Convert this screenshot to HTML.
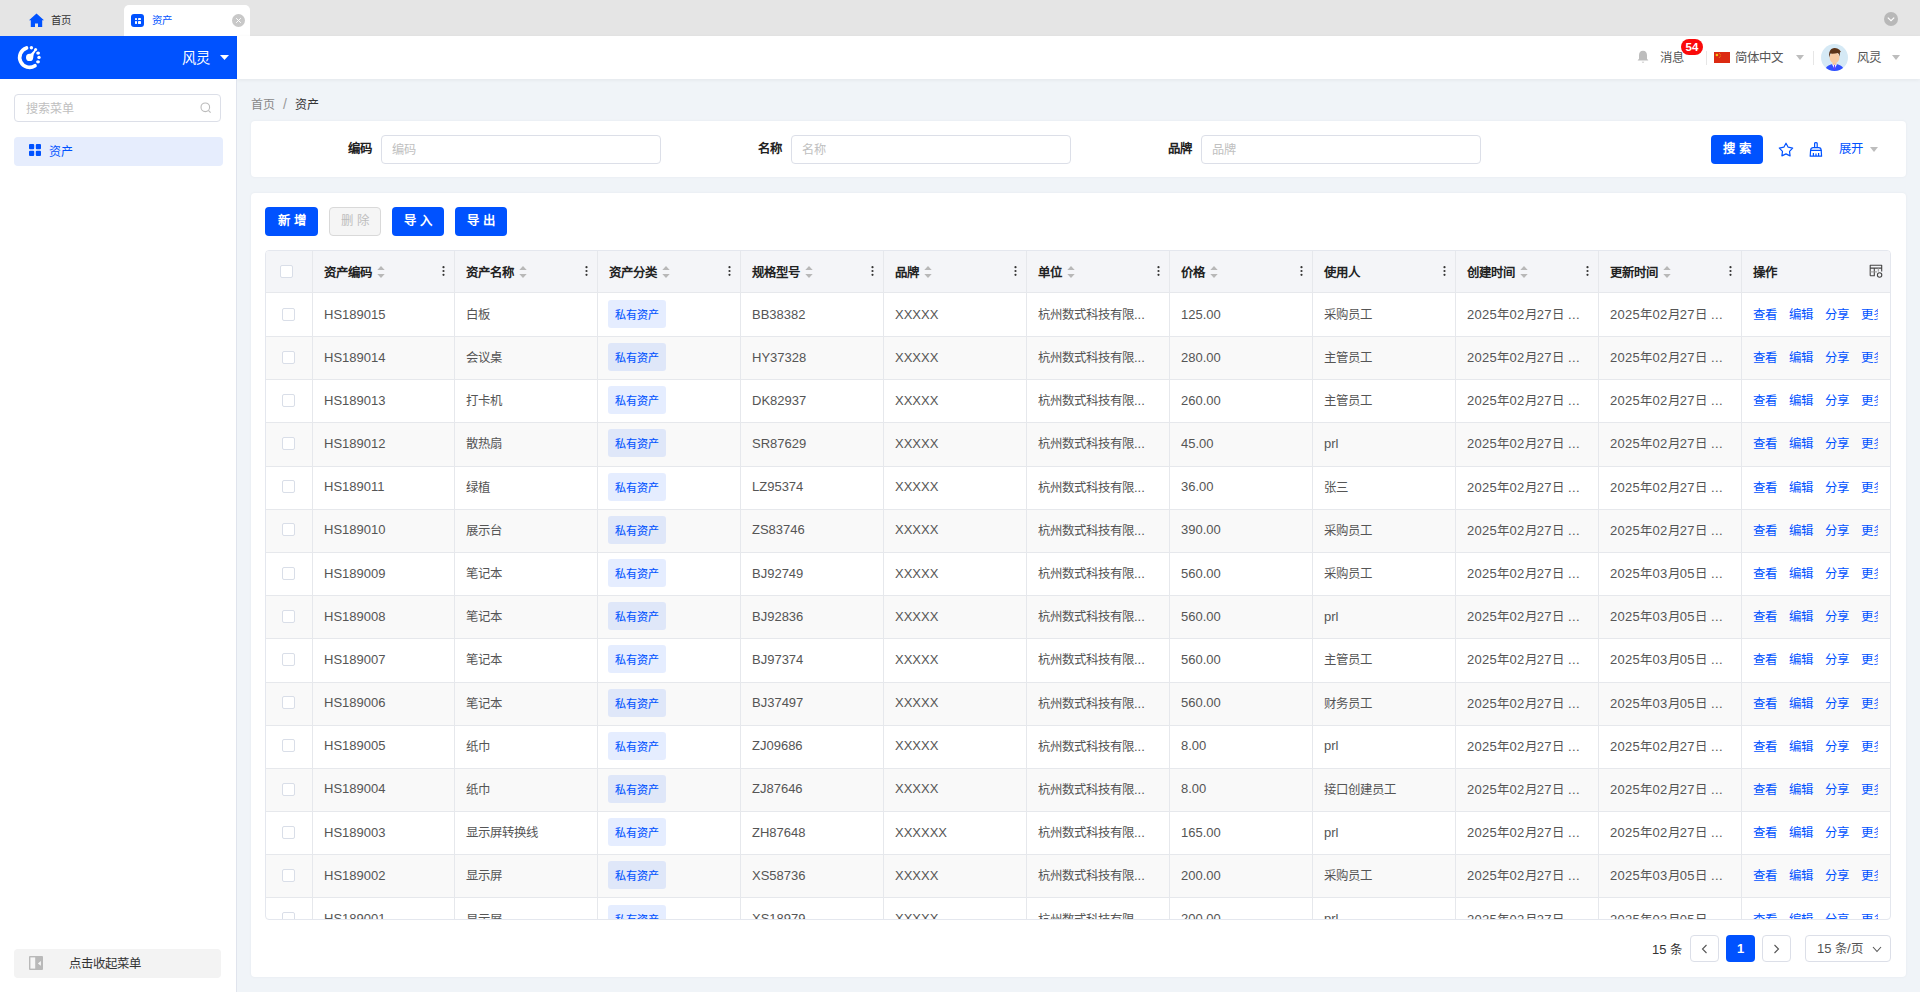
<!DOCTYPE html>
<html lang="zh-CN"><head><meta charset="utf-8"><title>资产</title>
<style>
*{box-sizing:border-box;margin:0;padding:0}
html,body{width:1920px;height:992px;overflow:hidden}
body{font-family:"Liberation Sans",sans-serif;font-size:13px;color:#333;background:#f0f4f8;position:relative}
.abs{position:absolute}
/* tab bar */
#tabbar{left:0;top:0;width:1920px;height:36px;background:#e5e5e5}
.tab-home{left:29px;top:13px;width:15px;height:15px}
.tab-home-t{left:51px;top:13px;font-size:10.4px;color:#333;line-height:16px}
#tab-active{left:124px;top:5px;width:126px;height:31px;background:#fff;border-radius:5px 5px 0 0}
.tab-ic{left:7px;top:9px;width:13px;height:13px;background:#0052ff;border-radius:3px}
.tab-ic i{position:absolute;width:2.5px;height:2.5px;background:#fff;border-radius:.4px}
.tab-t{left:28px;top:8px;font-size:10.4px;color:#0052ff;line-height:16px}
.tab-x{left:108px;top:9px;width:13px;height:13px;background:#c8c8c8;border-radius:50%}
.tab-more{left:1884px;top:12px;width:14px;height:14px;background:#b8b8b8;border-radius:50%}
/* header */
#logo-bar{left:0;top:36px;width:237px;height:43px;background:#0052ff}
#hdr{left:237px;top:36px;width:1683px;height:43px;background:#fff;box-shadow:0 1px 4px rgba(0,0,0,.06)}
.hd-t{font-size:12.4px;color:#555;line-height:16px;margin-top:1px}
/* sidebar */
#side{left:0;top:79px;width:237px;height:913px;background:#fff;border-right:1px solid #e0e4ed}
.s-search{left:14px;top:15px;width:207px;height:28px;border:1px solid #dcdfe8;border-radius:4px}
.s-search span{position:absolute;left:11px;top:6px;font-size:12.1px;color:#c0c0c0;line-height:16px}
.s-item{left:14px;top:58px;width:209px;height:29px;background:#e6edfd;border-radius:4px}
.s-collapse{left:14px;top:870px;width:207px;height:29px;background:#f3f3f3;border-radius:4px}
/* cards */
.card{background:#fff;border-radius:4px;box-shadow:0 0 3px rgba(0,20,60,.05)}
#bc{left:251px;top:96px;font-size:12px;line-height:16px}
#search{left:251px;top:121px;width:1655px;height:56px}
.lbl{font-weight:bold;font-size:12.4px;color:#222;line-height:16px}
.inp{width:280px;height:29px;border:1px solid #dcdfe8;border-radius:4px;background:#fff}
.inp span{position:absolute;left:10px;top:6px;color:#c0c0c0;font-size:12.2px;line-height:16px}
.btn{height:29px;border-radius:4px;background:#0052ff;color:#fff;font-size:12.4px;line-height:29px;text-align:center;letter-spacing:4px;text-indent:4px;font-weight:bold}
.btn.dis{background:#f5f5f5;border:1px solid #d9d9d9;color:#bdbdbd;line-height:27px;font-weight:normal}
#tcard{left:251px;top:193px;width:1655px;height:784px}
#twrap{left:14px;top:57px;width:1626px;height:670px;border:1px solid #e4e7ee;border-radius:4px;overflow:hidden}
table{border-collapse:separate;border-spacing:0;table-layout:fixed;width:1624px}
th,td{border-right:1px solid #e6e8ec;border-bottom:1px solid #e6e8ec;padding:0 11px;white-space:nowrap;overflow:hidden;text-overflow:ellipsis;text-align:left}
th{height:42px;background:#f4f5f8;font-weight:bold;color:#222;position:relative}
td{height:43.2px;color:#555}
tr.st td{background:#f9f9f9}
td{padding-bottom:2px}
tbody tr:first-child td{height:44px;padding-bottom:1px}
th:last-child,td:last-child{border-right:none}
.cb{display:inline-block;width:13px;height:13px;border:1px solid #d9dee8;border-radius:2px;background:#fff;vertical-align:middle;position:relative;left:5px;top:-1px}
.hcb{left:3px!important}
.tag{display:inline-block;height:28px;line-height:28px;padding:0 7px;border-radius:3px;background:rgba(0,82,255,.1);color:#0052ff;font-size:11px;font-weight:normal;position:relative;top:0;left:-1px;line-height:30px;-webkit-text-stroke:.1px #0052ff}
.op a{color:#0052ff;text-decoration:none;margin-right:12px}
.op div{overflow:hidden;white-space:nowrap}
.sort{display:inline-block;vertical-align:middle;margin-left:4.5px;width:8px;height:12px;position:relative;top:-1.5px}
.keb{position:absolute;right:9px;top:15px;width:3px;height:10px}
.c{font-size:.955em}
.dt{letter-spacing:.3px}
.op{text-overflow:clip!important;padding-right:12px!important}
/* pager */
.pg{height:27px;border:1px solid #dcdfe8;border-radius:4px;background:#fff}
</style></head><body>

<div id="tabbar" class="abs">
  <svg class="abs tab-home" viewBox="0 0 15 15"><path d="M7.5 0.5 L0 7.2 L1.8 7.2 L1.8 14 L6 14 L6 10.5 L9 10.5 L9 14 L13.2 14 L13.2 7.2 L15 7.2 Z" fill="#0052ff"/></svg>
  <div class="abs tab-home-t">首页</div>
  <div id="tab-active" class="abs">
    <div class="abs tab-ic"><i style="left:3.5px;top:3.5px"></i><i style="left:7px;top:3.5px"></i><i style="left:3.5px;top:7px"></i><i style="left:7px;top:7px"></i></div>
    <div class="abs tab-t">资产</div>
    <div class="abs tab-x"><svg width="13" height="13" viewBox="0 0 13 13"><path d="M4.2 4.2 L8.8 8.8 M8.8 4.2 L4.2 8.8" stroke="#fff" stroke-width="1"/></svg></div>
  </div>
  <div class="abs tab-more"><svg width="14" height="14" viewBox="0 0 14 14"><path d="M3.8 5.6 L7 8.6 L10.2 5.6" stroke="#fff" stroke-width="1.2" fill="none"/></svg></div>
</div>

<div id="logo-bar" class="abs">
  <svg class="abs" style="left:16px;top:8px" width="28" height="28" viewBox="0 0 28 28">
    <path d="M10.5 4 A9.9 9.9 0 1 0 19 21.7" stroke="#fff" stroke-width="3.7" fill="none" stroke-linecap="round"/>
    <circle cx="13.6" cy="13.4" r="3.6" fill="#fff"/>
    <path d="M11 11.2 Q15.6 10.4 18.9 4.9 L20.3 6.3 Q17.4 9.6 17.1 13.6 Z" fill="#fff"/>
    <circle cx="15.4" cy="3.8" r="1.7" fill="#fff"/>
    <circle cx="19.6" cy="5.6" r="1.5" fill="#fff"/>
    <ellipse cx="22.1" cy="9.1" rx="1.9" ry="1.6" fill="#fff"/>
    <circle cx="23" cy="13.4" r="1.7" fill="#fff"/>
    <ellipse cx="22" cy="17.8" rx="1.9" ry="1.6" fill="#fff"/>
  </svg>
  <div class="abs" style="left:182px;top:13px;font-size:14.3px;color:#fff;line-height:18px">风灵</div>
  <svg class="abs" style="left:220px;top:19px" width="9" height="5" viewBox="0 0 9 5"><path d="M0 0 H9 L4.5 5Z" fill="#fff"/></svg>
</div>

<div id="hdr" class="abs">
  <svg class="abs" style="left:1400px;top:14px" width="12" height="14" viewBox="0 0 12 14"><path d="M6 0.8 C3.3 0.8 2 2.8 2 5.3 L2 8.8 L0.6 10.6 L11.4 10.6 L10 8.8 L10 5.3 C10 2.8 8.7 0.8 6 0.8Z" fill="#bdbdbd"/><path d="M4.6 11.8 Q6 13.6 7.4 11.8Z" fill="#bdbdbd"/></svg>
  <div class="abs hd-t" style="left:1423px;top:13px">消息</div>
  <div class="abs" style="left:1444px;top:3px;width:22px;height:16px;border-radius:8px;background:#fa0a0a;color:#fff;font-size:11.5px;font-weight:bold;line-height:17px;text-align:center">54</div>
  <div class="abs" style="left:1469px;top:15px;width:1px;height:14px;background:#e6e6e6"></div>
  <svg class="abs" style="left:1477px;top:16px" width="16" height="11" viewBox="0 0 16 11"><rect width="16" height="11" fill="#dc2a12"/><circle cx="2.9" cy="3" r="1.3" fill="#f5c518"/><circle cx="5.4" cy="1.6" r=".5" fill="#e89a14"/><circle cx="6.3" cy="2.8" r=".5" fill="#e89a14"/><circle cx="6.2" cy="4.3" r=".5" fill="#e89a14"/><circle cx="5.3" cy="5.4" r=".5" fill="#e89a14"/></svg>
  <div class="abs hd-t" style="left:1498px;top:13px">简体中文</div>
  <svg class="abs" style="left:1559px;top:19px" width="8" height="5" viewBox="0 0 8 5"><path d="M0 0 H8 L4 5Z" fill="#bdbdbd"/></svg>
  <div class="abs" style="left:1576px;top:15px;width:1px;height:14px;background:#e6e6e6"></div>
  <svg class="abs" style="left:1584px;top:8px" width="27" height="27" viewBox="0 0 27 27">
    <defs><clipPath id="avc"><circle cx="13.5" cy="13.5" r="13.5"/></clipPath></defs>
    <circle cx="13.5" cy="13.5" r="13.5" fill="#d5e9f5"/>
    <g clip-path="url(#avc)">
      <path d="M3.5 27 Q5 21.5 10.5 20.2 L16.5 20.2 Q22 21.5 23.5 27Z" fill="#3050ff"/>
      <path d="M11 20.2 L13.5 25 L16 20.2Z" fill="#fff"/>
      <path d="M13 21 L14 21 L14.4 25.5 L12.6 25.5Z" fill="#6a3cff"/>
      <rect x="11.6" y="16.5" width="3.8" height="4.2" fill="#f5c29a"/>
      <ellipse cx="13.5" cy="13.6" rx="4.9" ry="5.6" fill="#f8cba3"/>
      <path d="M8.3 13.4 Q7.3 7.6 10.4 5 Q13.2 3.4 16.3 4.5 Q18.7 5.5 19.9 7.7 L18.9 8.5 L18.8 12.8 Q18.2 9.8 16.8 9 Q13 10 9.4 9.6 Q8.8 11.2 8.3 13.4Z" fill="#5d3418"/>
    </g>
  </svg>
  <div class="abs hd-t" style="left:1620px;top:13px">风灵</div>
  <svg class="abs" style="left:1655px;top:19px" width="8" height="5" viewBox="0 0 8 5"><path d="M0 0 H8 L4 5Z" fill="#bdbdbd"/></svg>
</div>

<div id="side" class="abs">
  <div class="abs s-search"><span>搜索菜单</span>
    <svg class="abs" style="left:185px;top:7px" width="12" height="12" viewBox="0 0 12 12"><circle cx="5.3" cy="5.3" r="4.3" stroke="#bbb" stroke-width="1.1" fill="none"/><path d="M8.6 8.6 L10.6 10.6" stroke="#bbb" stroke-width="1.1"/></svg>
  </div>
  <div class="abs s-item">
    <svg class="abs" style="left:15px;top:7px" width="12" height="12" viewBox="0 0 12 12"><rect x="0" y="0" width="5.2" height="5.2" rx="1" fill="#0052ff"/><rect x="6.8" y="0" width="5.2" height="5.2" rx="1" fill="#0052ff"/><rect x="0" y="6.8" width="5.2" height="5.2" rx="1" fill="#0052ff"/><rect x="6.8" y="6.8" width="5.2" height="5.2" rx="1" fill="#0052ff"/></svg>
    <div class="abs" style="left:35px;top:7px;color:#0052ff;font-size:12px;line-height:16px">资产</div>
  </div>
  <div class="abs s-collapse">
    <svg class="abs" style="left:15px;top:7px" width="14" height="14" viewBox="0 0 14 14"><rect x="0" y="0" width="14" height="14" rx="1" fill="#b9b9b9"/><rect x="1.4" y="1.4" width="4.8" height="11.2" fill="#f6f6f6"/><path d="M11.9 5 L8.9 7.4 L11.9 9.8Z" fill="#f6f6f6"/></svg>
    <div class="abs" style="left:55px;top:7px;color:#333;font-size:12.4px;line-height:16px">点击收起菜单</div>
  </div>
</div>

<div id="bc" class="abs"><span style="color:#888">首页</span><span style="color:#999;margin:0 8px;font-size:14px">/</span><span style="color:#333">资产</span></div>

<div id="search" class="abs card">
  <div class="abs lbl" style="left:97px;top:20px">编码</div>
  <div class="abs inp" style="left:130px;top:14px"><span>编码</span></div>
  <div class="abs lbl" style="left:507px;top:20px">名称</div>
  <div class="abs inp" style="left:540px;top:14px"><span>名称</span></div>
  <div class="abs lbl" style="left:917px;top:20px">品牌</div>
  <div class="abs inp" style="left:950px;top:14px"><span>品牌</span></div>
  <div class="abs btn" style="left:1460px;top:14px;width:52px">搜索</div>
  <svg class="abs" style="left:1527px;top:21px" width="16" height="16" viewBox="0 0 16 16"><path d="M8.00 1.20 L10.17 5.21 L14.66 6.04 L11.52 9.34 L12.11 13.86 L8.00 11.90 L3.89 13.86 L4.48 9.34 L1.34 6.04 L5.83 5.21Z" fill="none" stroke="#0052ff" stroke-width="1.2" stroke-linejoin="round"/></svg>
  <svg class="abs" style="left:1558px;top:21px" width="14" height="15" viewBox="0 0 14 15"><path d="M5.6 5.6 L5.6 1.4 Q5.6 0.6 6.9 0.6 Q8.2 0.6 8.2 1.4 L8.2 5.6 M1.6 8.4 Q1.6 5.6 4.2 5.6 L9.6 5.6 Q12.2 5.6 12.2 8.4 Z M1.6 8.4 L1.2 14.2 L12.6 14.2 L12.2 8.4 M4.4 11 L4.4 14.2 M7 11.4 L7 14.2 M9.6 11 L9.6 14.2" fill="none" stroke="#0052ff" stroke-width="1.2" stroke-linejoin="round"/></svg>
  <div class="abs" style="left:1588px;top:20px;color:#0052ff;font-size:12.4px;line-height:16px">展开</div>
  <svg class="abs" style="left:1619px;top:26px" width="8" height="5" viewBox="0 0 8 5"><path d="M0 0 H8 L4 5Z" fill="#bdbdbd"/></svg>
</div>

<div id="tcard" class="abs card">
  <div class="abs btn" style="left:14px;top:14px;width:53px">新增</div>
  <div class="abs btn dis" style="left:78px;top:14px;width:52px">删除</div>
  <div class="abs btn" style="left:141px;top:14px;width:52px">导入</div>
  <div class="abs btn" style="left:204px;top:14px;width:52px">导出</div>
  <div id="twrap" class="abs"><table><colgroup><col style="width:47px"><col style="width:142px"><col style="width:143px"><col style="width:143px"><col style="width:143px"><col style="width:143px"><col style="width:143px"><col style="width:143px"><col style="width:143px"><col style="width:143px"><col style="width:143px"><col style="width:148px"></colgroup><thead><tr><th class="ck"><span class="cb hcb"></span></th><th><span class="c">资产编码</span><svg class="sort" viewBox="0 0 8 12"><path d="M4 0 L7.7 4.1 H0.3Z M4 12 L7.7 7.9 H0.3Z" fill="#b8b8b8"/></svg><svg class="keb" viewBox="0 0 3 10"><circle cx="1.5" cy="1.2" r="1.1" fill="#333"/><circle cx="1.5" cy="5" r="1.1" fill="#333"/><circle cx="1.5" cy="8.8" r="1.1" fill="#333"/></svg></th><th><span class="c">资产名称</span><svg class="sort" viewBox="0 0 8 12"><path d="M4 0 L7.7 4.1 H0.3Z M4 12 L7.7 7.9 H0.3Z" fill="#b8b8b8"/></svg><svg class="keb" viewBox="0 0 3 10"><circle cx="1.5" cy="1.2" r="1.1" fill="#333"/><circle cx="1.5" cy="5" r="1.1" fill="#333"/><circle cx="1.5" cy="8.8" r="1.1" fill="#333"/></svg></th><th><span class="c">资产分类</span><svg class="sort" viewBox="0 0 8 12"><path d="M4 0 L7.7 4.1 H0.3Z M4 12 L7.7 7.9 H0.3Z" fill="#b8b8b8"/></svg><svg class="keb" viewBox="0 0 3 10"><circle cx="1.5" cy="1.2" r="1.1" fill="#333"/><circle cx="1.5" cy="5" r="1.1" fill="#333"/><circle cx="1.5" cy="8.8" r="1.1" fill="#333"/></svg></th><th><span class="c">规格型号</span><svg class="sort" viewBox="0 0 8 12"><path d="M4 0 L7.7 4.1 H0.3Z M4 12 L7.7 7.9 H0.3Z" fill="#b8b8b8"/></svg><svg class="keb" viewBox="0 0 3 10"><circle cx="1.5" cy="1.2" r="1.1" fill="#333"/><circle cx="1.5" cy="5" r="1.1" fill="#333"/><circle cx="1.5" cy="8.8" r="1.1" fill="#333"/></svg></th><th><span class="c">品牌</span><svg class="sort" viewBox="0 0 8 12"><path d="M4 0 L7.7 4.1 H0.3Z M4 12 L7.7 7.9 H0.3Z" fill="#b8b8b8"/></svg><svg class="keb" viewBox="0 0 3 10"><circle cx="1.5" cy="1.2" r="1.1" fill="#333"/><circle cx="1.5" cy="5" r="1.1" fill="#333"/><circle cx="1.5" cy="8.8" r="1.1" fill="#333"/></svg></th><th><span class="c">单位</span><svg class="sort" viewBox="0 0 8 12"><path d="M4 0 L7.7 4.1 H0.3Z M4 12 L7.7 7.9 H0.3Z" fill="#b8b8b8"/></svg><svg class="keb" viewBox="0 0 3 10"><circle cx="1.5" cy="1.2" r="1.1" fill="#333"/><circle cx="1.5" cy="5" r="1.1" fill="#333"/><circle cx="1.5" cy="8.8" r="1.1" fill="#333"/></svg></th><th><span class="c">价格</span><svg class="sort" viewBox="0 0 8 12"><path d="M4 0 L7.7 4.1 H0.3Z M4 12 L7.7 7.9 H0.3Z" fill="#b8b8b8"/></svg><svg class="keb" viewBox="0 0 3 10"><circle cx="1.5" cy="1.2" r="1.1" fill="#333"/><circle cx="1.5" cy="5" r="1.1" fill="#333"/><circle cx="1.5" cy="8.8" r="1.1" fill="#333"/></svg></th><th><span class="c">使用人</span><svg class="keb" viewBox="0 0 3 10"><circle cx="1.5" cy="1.2" r="1.1" fill="#333"/><circle cx="1.5" cy="5" r="1.1" fill="#333"/><circle cx="1.5" cy="8.8" r="1.1" fill="#333"/></svg></th><th><span class="c">创建时间</span><svg class="sort" viewBox="0 0 8 12"><path d="M4 0 L7.7 4.1 H0.3Z M4 12 L7.7 7.9 H0.3Z" fill="#b8b8b8"/></svg><svg class="keb" viewBox="0 0 3 10"><circle cx="1.5" cy="1.2" r="1.1" fill="#333"/><circle cx="1.5" cy="5" r="1.1" fill="#333"/><circle cx="1.5" cy="8.8" r="1.1" fill="#333"/></svg></th><th><span class="c">更新时间</span><svg class="sort" viewBox="0 0 8 12"><path d="M4 0 L7.7 4.1 H0.3Z M4 12 L7.7 7.9 H0.3Z" fill="#b8b8b8"/></svg><svg class="keb" viewBox="0 0 3 10"><circle cx="1.5" cy="1.2" r="1.1" fill="#333"/><circle cx="1.5" cy="5" r="1.1" fill="#333"/><circle cx="1.5" cy="8.8" r="1.1" fill="#333"/></svg></th><th><span class="c">操作</span><svg class="abs" style="left:127px;top:13px" width="14" height="14" viewBox="0 0 14 14"><path d="M1.2 11.8 V1.2 H12.7 V7.6 M1.2 11.8 H5.3 V4.1 M1.2 4.1 H12.7" fill="none" stroke="#444" stroke-width="1.1" stroke-linejoin="round"/><path d="M1.2 7.9 H8 M9.3 4.1 V7.6" fill="none" stroke="#999" stroke-width="1"/><circle cx="10.6" cy="11" r="2.2" fill="none" stroke="#444" stroke-width="1.1"/></svg></th></tr></thead><tbody><tr><td class="ck"><span class="cb"></span></td><td>HS189015</td><td><span class="c">白板</span></td><td><span class="tag">私有资产</span></td><td>BB38382</td><td>XXXXX</td><td><span class="c">杭州数式科技有限</span>...</td><td>125.00</td><td><span class="c">采购员工</span></td><td class="dt">2025<span class="c">年</span>02<span class="c">月</span>27<span class="c">日</span> ...</td><td class="dt">2025<span class="c">年</span>02<span class="c">月</span>27<span class="c">日</span> ...</td><td class="op"><div><a class="c">查看</a><a class="c">编辑</a><a class="c">分享</a><a class="c">更多</a></div></td></tr><tr class="st"><td class="ck"><span class="cb"></span></td><td>HS189014</td><td><span class="c">会议桌</span></td><td><span class="tag">私有资产</span></td><td>HY37328</td><td>XXXXX</td><td><span class="c">杭州数式科技有限</span>...</td><td>280.00</td><td><span class="c">主管员工</span></td><td class="dt">2025<span class="c">年</span>02<span class="c">月</span>27<span class="c">日</span> ...</td><td class="dt">2025<span class="c">年</span>02<span class="c">月</span>27<span class="c">日</span> ...</td><td class="op"><div><a class="c">查看</a><a class="c">编辑</a><a class="c">分享</a><a class="c">更多</a></div></td></tr><tr><td class="ck"><span class="cb"></span></td><td>HS189013</td><td><span class="c">打卡机</span></td><td><span class="tag">私有资产</span></td><td>DK82937</td><td>XXXXX</td><td><span class="c">杭州数式科技有限</span>...</td><td>260.00</td><td><span class="c">主管员工</span></td><td class="dt">2025<span class="c">年</span>02<span class="c">月</span>27<span class="c">日</span> ...</td><td class="dt">2025<span class="c">年</span>02<span class="c">月</span>27<span class="c">日</span> ...</td><td class="op"><div><a class="c">查看</a><a class="c">编辑</a><a class="c">分享</a><a class="c">更多</a></div></td></tr><tr class="st"><td class="ck"><span class="cb"></span></td><td>HS189012</td><td><span class="c">散热扇</span></td><td><span class="tag">私有资产</span></td><td>SR87629</td><td>XXXXX</td><td><span class="c">杭州数式科技有限</span>...</td><td>45.00</td><td>prl</td><td class="dt">2025<span class="c">年</span>02<span class="c">月</span>27<span class="c">日</span> ...</td><td class="dt">2025<span class="c">年</span>02<span class="c">月</span>27<span class="c">日</span> ...</td><td class="op"><div><a class="c">查看</a><a class="c">编辑</a><a class="c">分享</a><a class="c">更多</a></div></td></tr><tr><td class="ck"><span class="cb"></span></td><td>HS189011</td><td><span class="c">绿植</span></td><td><span class="tag">私有资产</span></td><td>LZ95374</td><td>XXXXX</td><td><span class="c">杭州数式科技有限</span>...</td><td>36.00</td><td><span class="c">张三</span></td><td class="dt">2025<span class="c">年</span>02<span class="c">月</span>27<span class="c">日</span> ...</td><td class="dt">2025<span class="c">年</span>02<span class="c">月</span>27<span class="c">日</span> ...</td><td class="op"><div><a class="c">查看</a><a class="c">编辑</a><a class="c">分享</a><a class="c">更多</a></div></td></tr><tr class="st"><td class="ck"><span class="cb"></span></td><td>HS189010</td><td><span class="c">展示台</span></td><td><span class="tag">私有资产</span></td><td>ZS83746</td><td>XXXXX</td><td><span class="c">杭州数式科技有限</span>...</td><td>390.00</td><td><span class="c">采购员工</span></td><td class="dt">2025<span class="c">年</span>02<span class="c">月</span>27<span class="c">日</span> ...</td><td class="dt">2025<span class="c">年</span>02<span class="c">月</span>27<span class="c">日</span> ...</td><td class="op"><div><a class="c">查看</a><a class="c">编辑</a><a class="c">分享</a><a class="c">更多</a></div></td></tr><tr><td class="ck"><span class="cb"></span></td><td>HS189009</td><td><span class="c">笔记本</span></td><td><span class="tag">私有资产</span></td><td>BJ92749</td><td>XXXXX</td><td><span class="c">杭州数式科技有限</span>...</td><td>560.00</td><td><span class="c">采购员工</span></td><td class="dt">2025<span class="c">年</span>02<span class="c">月</span>27<span class="c">日</span> ...</td><td class="dt">2025<span class="c">年</span>03<span class="c">月</span>05<span class="c">日</span> ...</td><td class="op"><div><a class="c">查看</a><a class="c">编辑</a><a class="c">分享</a><a class="c">更多</a></div></td></tr><tr class="st"><td class="ck"><span class="cb"></span></td><td>HS189008</td><td><span class="c">笔记本</span></td><td><span class="tag">私有资产</span></td><td>BJ92836</td><td>XXXXX</td><td><span class="c">杭州数式科技有限</span>...</td><td>560.00</td><td>prl</td><td class="dt">2025<span class="c">年</span>02<span class="c">月</span>27<span class="c">日</span> ...</td><td class="dt">2025<span class="c">年</span>03<span class="c">月</span>05<span class="c">日</span> ...</td><td class="op"><div><a class="c">查看</a><a class="c">编辑</a><a class="c">分享</a><a class="c">更多</a></div></td></tr><tr><td class="ck"><span class="cb"></span></td><td>HS189007</td><td><span class="c">笔记本</span></td><td><span class="tag">私有资产</span></td><td>BJ97374</td><td>XXXXX</td><td><span class="c">杭州数式科技有限</span>...</td><td>560.00</td><td><span class="c">主管员工</span></td><td class="dt">2025<span class="c">年</span>02<span class="c">月</span>27<span class="c">日</span> ...</td><td class="dt">2025<span class="c">年</span>03<span class="c">月</span>05<span class="c">日</span> ...</td><td class="op"><div><a class="c">查看</a><a class="c">编辑</a><a class="c">分享</a><a class="c">更多</a></div></td></tr><tr class="st"><td class="ck"><span class="cb"></span></td><td>HS189006</td><td><span class="c">笔记本</span></td><td><span class="tag">私有资产</span></td><td>BJ37497</td><td>XXXXX</td><td><span class="c">杭州数式科技有限</span>...</td><td>560.00</td><td><span class="c">财务员工</span></td><td class="dt">2025<span class="c">年</span>02<span class="c">月</span>27<span class="c">日</span> ...</td><td class="dt">2025<span class="c">年</span>03<span class="c">月</span>05<span class="c">日</span> ...</td><td class="op"><div><a class="c">查看</a><a class="c">编辑</a><a class="c">分享</a><a class="c">更多</a></div></td></tr><tr><td class="ck"><span class="cb"></span></td><td>HS189005</td><td><span class="c">纸巾</span></td><td><span class="tag">私有资产</span></td><td>ZJ09686</td><td>XXXXX</td><td><span class="c">杭州数式科技有限</span>...</td><td>8.00</td><td>prl</td><td class="dt">2025<span class="c">年</span>02<span class="c">月</span>27<span class="c">日</span> ...</td><td class="dt">2025<span class="c">年</span>02<span class="c">月</span>27<span class="c">日</span> ...</td><td class="op"><div><a class="c">查看</a><a class="c">编辑</a><a class="c">分享</a><a class="c">更多</a></div></td></tr><tr class="st"><td class="ck"><span class="cb"></span></td><td>HS189004</td><td><span class="c">纸巾</span></td><td><span class="tag">私有资产</span></td><td>ZJ87646</td><td>XXXXX</td><td><span class="c">杭州数式科技有限</span>...</td><td>8.00</td><td><span class="c">接口创建员工</span></td><td class="dt">2025<span class="c">年</span>02<span class="c">月</span>27<span class="c">日</span> ...</td><td class="dt">2025<span class="c">年</span>02<span class="c">月</span>27<span class="c">日</span> ...</td><td class="op"><div><a class="c">查看</a><a class="c">编辑</a><a class="c">分享</a><a class="c">更多</a></div></td></tr><tr><td class="ck"><span class="cb"></span></td><td>HS189003</td><td><span class="c">显示屏转换线</span></td><td><span class="tag">私有资产</span></td><td>ZH87648</td><td>XXXXXX</td><td><span class="c">杭州数式科技有限</span>...</td><td>165.00</td><td>prl</td><td class="dt">2025<span class="c">年</span>02<span class="c">月</span>27<span class="c">日</span> ...</td><td class="dt">2025<span class="c">年</span>02<span class="c">月</span>27<span class="c">日</span> ...</td><td class="op"><div><a class="c">查看</a><a class="c">编辑</a><a class="c">分享</a><a class="c">更多</a></div></td></tr><tr class="st"><td class="ck"><span class="cb"></span></td><td>HS189002</td><td><span class="c">显示屏</span></td><td><span class="tag">私有资产</span></td><td>XS58736</td><td>XXXXX</td><td><span class="c">杭州数式科技有限</span>...</td><td>200.00</td><td><span class="c">采购员工</span></td><td class="dt">2025<span class="c">年</span>02<span class="c">月</span>27<span class="c">日</span> ...</td><td class="dt">2025<span class="c">年</span>03<span class="c">月</span>05<span class="c">日</span> ...</td><td class="op"><div><a class="c">查看</a><a class="c">编辑</a><a class="c">分享</a><a class="c">更多</a></div></td></tr><tr><td class="ck"><span class="cb"></span></td><td>HS189001</td><td><span class="c">显示屏</span></td><td><span class="tag">私有资产</span></td><td>XS18979</td><td>XXXXX</td><td><span class="c">杭州数式科技有限</span>...</td><td>200.00</td><td>prl</td><td class="dt">2025<span class="c">年</span>02<span class="c">月</span>27<span class="c">日</span> ...</td><td class="dt">2025<span class="c">年</span>03<span class="c">月</span>05<span class="c">日</span> ...</td><td class="op"><div><a class="c">查看</a><a class="c">编辑</a><a class="c">分享</a><a class="c">更多</a></div></td></tr></tbody></table></div>
  <div class="abs" style="left:1401px;top:749px;font-size:13px;line-height:16px;color:#333">15 <span class="c">条</span></div>
  <div class="abs pg" style="left:1439px;top:742px;width:29px"><svg class="abs" style="left:9px;top:8px" width="9" height="10" viewBox="0 0 9 10"><path d="M6.5 1 L2.5 5 L6.5 9" fill="none" stroke="#555" stroke-width="1.1"/></svg></div>
  <div class="abs" style="left:1475px;top:742px;width:29px;height:27px;border-radius:4px;background:#0052ff;color:#fff;font-weight:bold;font-size:13px;line-height:27px;text-align:center">1</div>
  <div class="abs pg" style="left:1511px;top:742px;width:29px"><svg class="abs" style="left:9px;top:8px" width="9" height="10" viewBox="0 0 9 10"><path d="M2.5 1 L6.5 5 L2.5 9" fill="none" stroke="#555" stroke-width="1.1"/></svg></div>
  <div class="abs pg" style="left:1554px;top:742px;width:86px"><div class="abs" style="left:11px;top:5px;font-size:13px;line-height:16px;color:#555">15 <span class="c">条</span>/<span class="c">页</span></div><svg class="abs" style="left:66px;top:10px" width="10" height="7" viewBox="0 0 10 7"><path d="M1 1 L5 5.5 L9 1" fill="none" stroke="#555" stroke-width="1.1"/></svg></div>
</div>

</body></html>
